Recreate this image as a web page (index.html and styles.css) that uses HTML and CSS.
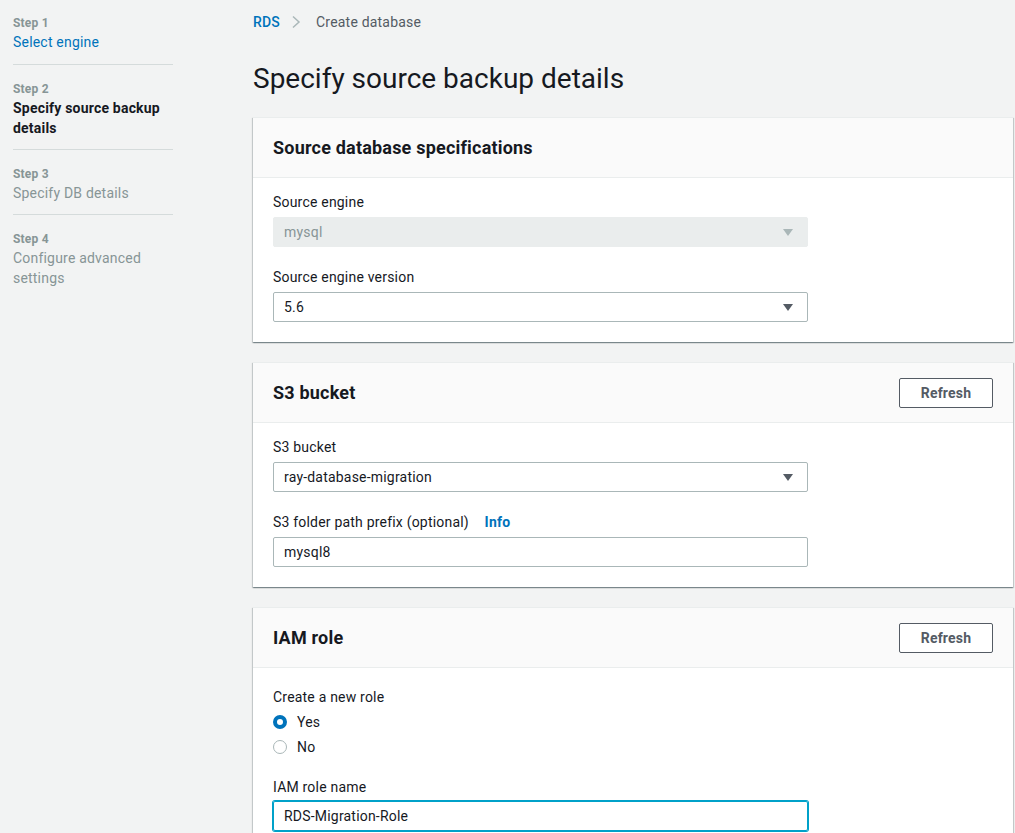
FILE: index.html
```html
<!DOCTYPE html>
<html lang="en">
<head>
<meta charset="utf-8">
<title>Specify source backup details</title>
<link rel="stylesheet" href="styles.css">
</head>
<body>
<div class="layout">
  <nav class="steps">
    <div class="step">
      <div class="step-num">Step 1</div>
      <a class="step-title link">Select engine</a>
    </div>
    <div class="step">
      <div class="step-num">Step 2</div>
      <div class="step-title current">Specify source backup details</div>
    </div>
    <div class="step">
      <div class="step-num">Step 3</div>
      <div class="step-title disabled">Specify DB details</div>
    </div>
    <div class="step last">
      <div class="step-num">Step 4</div>
      <div class="step-title disabled">Configure advanced settings</div>
    </div>
  </nav>

  <main class="main">
    <div class="breadcrumbs">
      <a class="crumb-link">RDS</a>
      <svg class="crumb-sep" width="10" height="14" viewBox="0 0 10 14"><path d="M2 1.5 L8 7 L2 12.5" fill="none" stroke="#aab7b8" stroke-width="1.5"/></svg>
      <span class="crumb-current">Create database</span>
    </div>
    <h1 class="page-title">Specify source backup details</h1>

    <section class="card">
      <header class="card-header">
        <h2 class="card-title">Source database specifications</h2>
      </header>
      <div class="card-body">
        <div class="field">
          <label class="field-label">Source engine</label>
          <div class="select disabled">
            <span>mysql</span>
            <svg class="caret" width="10" height="7" viewBox="0 0 10 7"><path d="M0 0 H10 L5 7 Z" fill="#aab7b8"/></svg>
          </div>
        </div>
        <div class="field">
          <label class="field-label">Source engine version</label>
          <div class="select">
            <span>5.6</span>
            <svg class="caret" width="10" height="7" viewBox="0 0 10 7"><path d="M0 0 H10 L5 7 Z" fill="#545b64"/></svg>
          </div>
        </div>
      </div>
    </section>

    <section class="card">
      <header class="card-header">
        <h2 class="card-title">S3 bucket</h2>
        <button class="btn">Refresh</button>
      </header>
      <div class="card-body">
        <div class="field">
          <label class="field-label">S3 bucket</label>
          <div class="select">
            <span>ray-database-migration</span>
            <svg class="caret" width="10" height="7" viewBox="0 0 10 7"><path d="M0 0 H10 L5 7 Z" fill="#545b64"/></svg>
          </div>
        </div>
        <div class="field">
          <label class="field-label">S3 folder path prefix (optional) <a class="info">Info</a></label>
          <div class="input"><span>mysql8</span></div>
        </div>
      </div>
    </section>

    <section class="card">
      <header class="card-header">
        <h2 class="card-title">IAM role</h2>
        <button class="btn">Refresh</button>
      </header>
      <div class="card-body roles">
        <div class="field">
          <label class="field-label">Create a new role</label>
          <div class="radio-group">
            <div class="radio-row"><span class="radio checked"></span><span>Yes</span></div>
            <div class="radio-row"><span class="radio"></span><span>No</span></div>
          </div>
        </div>
        <div class="field role-name">
          <label class="field-label">IAM role name</label>
          <div class="input focused"><span>RDS-Migration-Role</span></div>
        </div>
      </div>
    </section>
  </main>
</div>
</body>
</html>
```

FILE: styles.css
```css
* { box-sizing: border-box; }
html, body { margin: 0; padding: 0; }
body {
  background: #f2f3f3;
  font-family: Roboto, "Open Sans", "Liberation Sans", sans-serif;
  font-size: 14px;
  line-height: 20px;
  letter-spacing: 0.2px;
  color: #16191f;
  overflow: hidden;
  height: 833px;
}
.layout {
  display: grid;
  grid-template-columns: 253px 1fr;
}
.steps {
  padding: 0 80px 0 13px;
}
.step {
  padding: 15px 0 11px;
  border-bottom: 1px solid #d5dbdb;
}
.step:first-child { padding: 14px 0 12px; }
.step.last { border-bottom: none; }
.step-num {
  font-size: 12px;
  line-height: 18px;
  font-weight: 700;
  color: #879596;
}
.step-title { font-size: 14px; line-height: 20px; }
.step-title.link { color: #0073bb; display: block; }
.step-title.current { color: #16191f; font-weight: 700; }
.step-title.disabled { color: #879596; }

.main {
  padding: 12px 2px 0 0;
  min-width: 0;
}
.breadcrumbs {
  display: flex;
  align-items: center;
  height: 20px;
}
.crumb-link { color: #0073bb; font-weight: 500; }
.crumb-sep { margin: 0 15px 0 11px; }
.crumb-current { color: #545b64; }
.page-title {
  margin: 29px 0 20px;
  font-size: 28px;
  line-height: 36px;
  font-weight: 400;
  letter-spacing: 0;
  color: #16191f;
}
.card {
  background: #fff;
  border-top: 1px solid #eaeded;
  box-shadow: 0 1px 1px 0 rgba(0,28,36,.3), 1px 1px 1px 0 rgba(0,28,36,.15), -1px 1px 1px 0 rgba(0,28,36,.15);
  margin-bottom: 20px;
}
.card-header {
  background: #fafafa;
  border-bottom: 1px solid #eaeded;
  height: 60px;
  padding: 0 20px;
  display: flex;
  align-items: center;
  justify-content: space-between;
}
.card-title {
  margin: 0;
  font-size: 18px;
  line-height: 20px;
  font-weight: 700;
}
.btn {
  font-family: inherit;
  font-size: 14px;
  font-weight: 700;
  letter-spacing: 0.2px;
  color: #545b64;
  background: #fff;
  border: 1px solid #545b64;
  border-radius: 2px;
  width: 94px;
  height: 30px;
  padding: 0;
}
.card-body {
  padding: 14px 20px 20px;
}
.card-body.roles { padding-top: 19px; }
.field + .field { margin-top: 20px; }
.field + .field.role-name { margin-top: 18px; }
.field-label {
  display: block;
  margin-bottom: 5px;
}
.role-name .field-label { margin-bottom: 4px; }
.info {
  color: #0073bb;
  font-weight: 700;
  margin-left: 12px;
}
.select, .input {
  width: 535px;
  height: 30px;
  border: 1px solid #aab7b8;
  border-radius: 2px;
  display: flex;
  align-items: center;
  justify-content: space-between;
  padding: 0 14px 0 10px;
}
.select.disabled {
  background: #eaeded;
  border-color: #eaeded;
  color: #879596;
}
.input.focused {
  border-color: #00a1c9;
  box-shadow: 0 0 0 1px #00a1c9;
}
.radio-group { margin-top: -3px; }
.radio-row {
  display: flex;
  align-items: center;
  height: 25px;
}
.radio {
  width: 14px;
  height: 14px;
  border-radius: 50%;
  border: 1px solid #aab7b8;
  margin-right: 10px;
  background: #fff;
}
.radio.checked {
  border: 4px solid #0073bb;
}
```
